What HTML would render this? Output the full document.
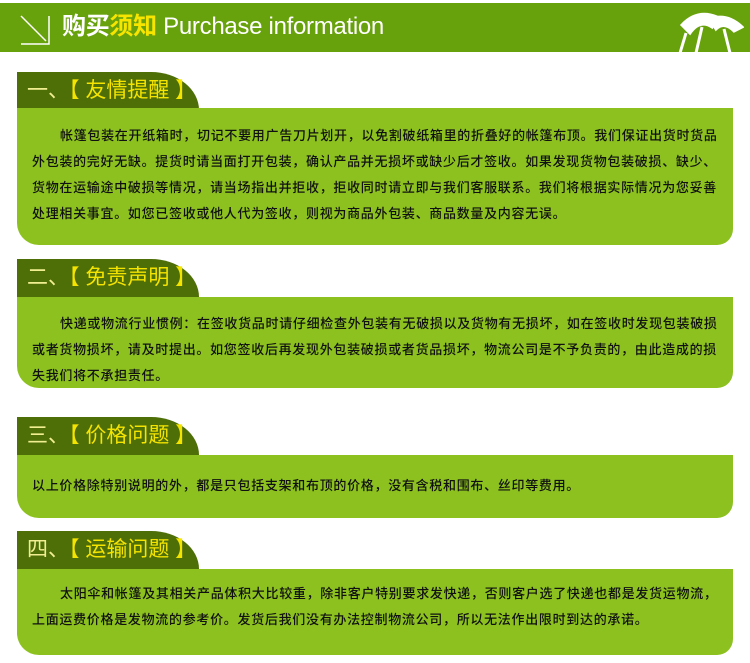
<!DOCTYPE html>
<html><head><meta charset="utf-8"><style>
body{margin:0;width:750px;height:663px;background:#fff;position:relative;overflow:hidden;font-family:"Liberation Sans","Noto Sans CJK SC",sans-serif}
.hdr{position:absolute;left:0;top:3px;width:750px;height:49px;background:#67a10b}
.hdr .t{position:absolute;left:62px;top:9px;font-size:24px;color:#fff;line-height:30px;letter-spacing:-0.3px}
.hdr .t b{font-weight:bold}.hdr .t .y{color:#f7e500}
.tab{position:absolute;left:17px;width:182px;height:38px;background:#4e6e08;border-top-right-radius:48px 38px;color:#f5e400;font-size:21px;line-height:38px;padding-left:10px;box-sizing:border-box}
.tab span{color:#f0ee90}
.box{position:absolute;left:17px;width:716px;background:#8cc11f;border-radius:0 0 16px 22px;box-sizing:border-box;padding:0 6px 0 15px;font-size:13px;letter-spacing:0.7px;color:#111;line-height:26px;font-weight:500}
.box p{margin:0;text-indent:28px}
</style></head><body>
<div class="hdr">
<svg style="position:absolute;left:20px;top:12px" width="30" height="30"><path d="M1 1 L26 26 M1 29 H29 V1" stroke="#fff" stroke-width="1.5" fill="none"/></svg>
<div class="t"><b>购买</b><b class="y">须知</b> Purchase information</div>
<svg style="position:absolute;left:672px;top:4px" width="72" height="48"><path d="M10 18 Q25 2 45 10 L40 20 Q28 12 18 26Z M38 12 Q55 6 70 20 L62 24 Q52 14 44 22Z M14 26 L8 46 M30 20 L24 46 M52 22 L58 46" stroke="#fff" stroke-width="3" fill="#fff"/></svg>
</div>

<div class="tab" style="top:72px"><span>一、</span>【 友情提醒 】</div>
<div class="box" style="top:108px;height:137px;padding-top:15px"><p>帐篷包装在开纸箱时，切记不要用广告刀片划开，以免割破纸箱里的折叠好的帐篷布顶。我们保证出货时货品外包装的完好无缺。提货时请当面打开包装，确认产品并无损坏或缺少后才签收。如果发现货物包装破损、缺少、货物在运输途中破损等情况，请当场指出并拒收，拒收同时请立即与我们客服联系。我们将根据实际情况为您妥善处理相关事宜。如您已签收或他人代为签收，则视为商品外包装、商品数量及内容无误。</p></div>

<div class="tab" style="top:259px"><span>二、</span>【 免责声明 】</div>
<div class="box" style="top:297px;height:91px;padding-top:14px"><p>快递或物流行业惯例：在签收货品时请仔细检查外包装有无破损以及货物有无损坏，如在签收时发现包装破损或者货物损坏，请及时提出。如您签收后再发现外包装破损或者货品损坏，物流公司是不予负责的，由此造成的损失我们将不承担责任。</p></div>

<div class="tab" style="top:417px"><span>三、</span>【 价格问题 】</div>
<div class="box" style="top:455px;height:63px;padding-top:18px"><p style="text-indent:0">以上价格除特别说明的外，都是只包括支架和布顶的价格，没有含税和围布、丝印等费用。</p></div>

<div class="tab" style="top:531px"><span>四、</span>【 运输问题 】</div>
<div class="box" style="top:569px;height:86px;padding-top:12px"><p>太阳伞和帐篷及其相关产品体积大比较重，除非客户特别要求发快递，否则客户选了快递也都是发货运物流，上面运费价格是发物流的参考价。发货后我们没有办法控制物流公司，所以无法作出限时到达的承诺。</p></div>
</body></html>
